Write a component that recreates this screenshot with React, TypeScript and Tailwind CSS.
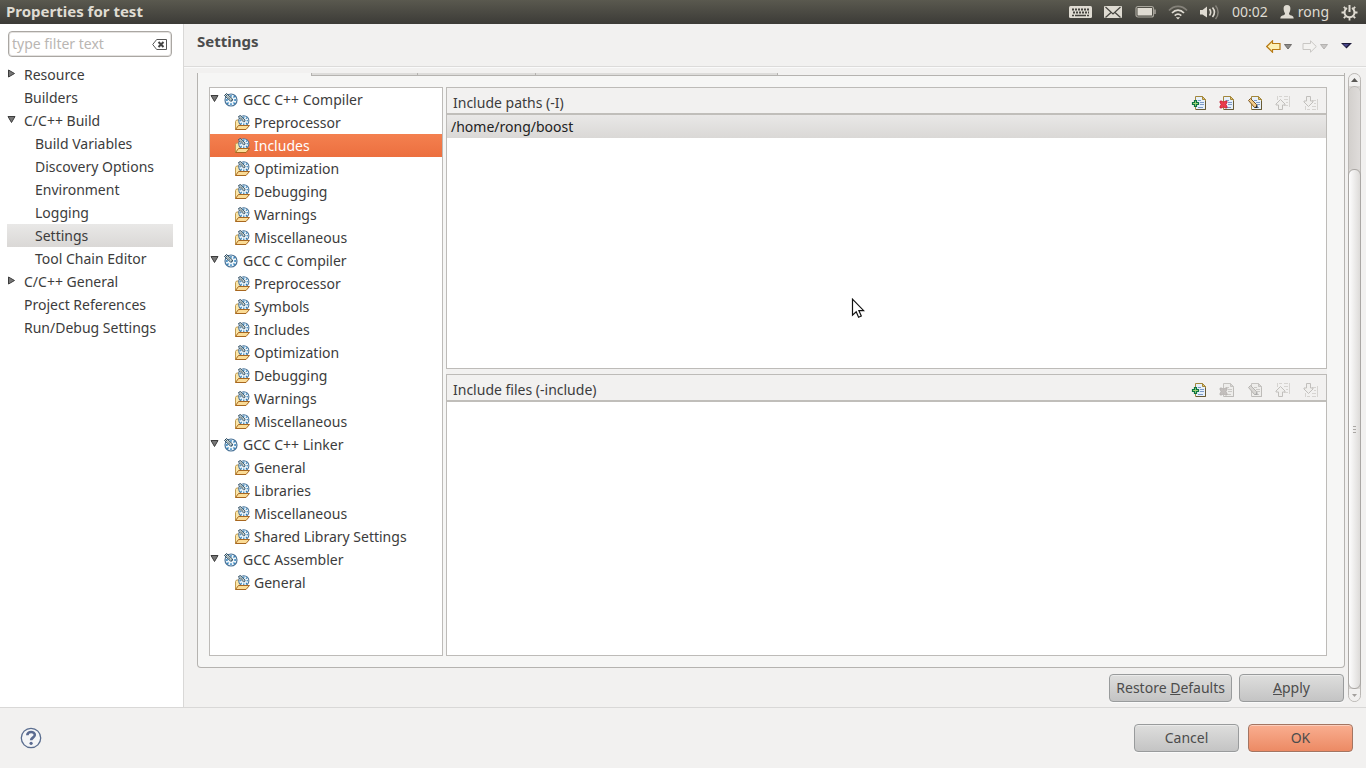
import React, { useState } from "react";
import type { ReactNode } from "react";

type Page = { label: string; level: number; arrow?: "open" | "closed" };

const pages: Page[] = [
  { label: "Resource", level: 0, arrow: "closed" },
  { label: "Builders", level: 0 },
  { label: "C/C++ Build", level: 0, arrow: "open" },
  { label: "Build Variables", level: 1 },
  { label: "Discovery Options", level: 1 },
  { label: "Environment", level: 1 },
  { label: "Logging", level: 1 },
  { label: "Settings", level: 1 },
  { label: "Tool Chain Editor", level: 1 },
  { label: "C/C++ General", level: 0, arrow: "closed" },
  { label: "Project References", level: 0 },
  { label: "Run/Debug Settings", level: 0 },
];

const tools = [
  {
    name: "GCC C++ Compiler",
    options: ["Preprocessor", "Includes", "Optimization", "Debugging", "Warnings", "Miscellaneous"],
  },
  {
    name: "GCC C Compiler",
    options: ["Preprocessor", "Symbols", "Includes", "Optimization", "Debugging", "Warnings", "Miscellaneous"],
  },
  { name: "GCC C++ Linker", options: ["General", "Libraries", "Miscellaneous", "Shared Library Settings"] },
  { name: "GCC Assembler", options: ["General"] },
];

function Arrow({ open }: { open: boolean }) {
  return (
    <svg width="9" height="9" viewBox="0 0 9 9" className="shrink-0" aria-hidden="true">
      {open ? (
        <path d="M1 1.5h7L4.5 7.5z" fill="#777" stroke="#3c3c3c" strokeLinejoin="round" />
      ) : (
        <path d="M1.5 1v7L7.5 4.5z" fill="#777" stroke="#3c3c3c" strokeLinejoin="round" />
      )}
    </svg>
  );
}

function GaugeShape() {
  return (
    <g>
      <circle cx="8" cy="8" r="6" fill="#eef6fb" stroke="#4a7398" strokeWidth="1.2" />
      <path
        d="M8 3v1.8M8 11.2V13M3 8h1.8M11.2 8H13M11.700 4.300l-1.200 1.200M4.300 11.700l1.200-1.200M11.700 11.700l-1.200-1.200"
        stroke="#1f78b8"
        strokeWidth="1.300"
      />
      <path d="M1.500 3.500 3.500 1.500 9.500 7 9 9H7.500z" fill="#dfe6de" stroke="#24445e" strokeWidth="1" />
      <path d="M3 3 8.500 8" stroke="#173954" strokeWidth="1" strokeDasharray="1.200 1" />
    </g>
  );
}

function GaugeIcon() {
  return (
    <svg width="16" height="16" viewBox="0 0 16 16" className="shrink-0" aria-hidden="true">
      <GaugeShape />
    </svg>
  );
}

function FolderIcon() {
  return (
    <svg width="16" height="16" viewBox="0 0 16 16" className="shrink-0" aria-hidden="true">
      <path d="M1.500 14.500v-8l1-1.500h3l1 1.500h6v3" fill="#fbe6a8" stroke="#c09a50" />
      <g transform="translate(3 -1) scale(.85)">
        <GaugeShape />
      </g>
      <path d="M1.500 14.500 4.500 10.500h11l-3.500 4z" fill="#fbdc96" stroke="#a8671f" strokeLinejoin="round" />
    </svg>
  );
}

type ToolKind = "Add" | "Delete" | "Edit" | "Move up" | "Move down";

function ToolIcon({ kind, off }: { kind: ToolKind; off: boolean }) {
  if (kind === "Move up" || kind === "Move down") {
    const up = kind === "Move up";
    return (
      <svg width="16" height="16" viewBox="0 0 16 16" aria-hidden="true">
        <path
          d={
            up
              ? "M2.500 1v4M14.500 1v11M4 1.500h3M9 1.500h4M9 4.500h4M11 7.500h2M9 10.500h4"
              : "M2.500 15v-4M14.500 4v11M9 5.500h4M11 8.500h2M9 11.500h4M4 14.500h3M9 14.500h4"
          }
          fill="none"
          stroke="#d6d4d1"
        />
        <path
          d={up ? "M5.500 4.500 10 9v1H7.500v4.500h-4V10H1V9z" : "M3.500 1.500h4V6H10v1l-4.500 4.500L1 7V6h2.500z"}
          fill="#f0efed"
          stroke="#c1bfbc"
        />
      </svg>
    );
  }
  const edge = off ? "#c5c3c0" : "#a3873c";
  const line = off ? "#cbc9c6" : "#7d9bc8";
  return (
    <svg width="16" height="16" viewBox="0 0 16 16" aria-hidden="true">
      <path d="M4.500 1.500h7l3 3v10h-10z" fill={off ? "#eeedeb" : "#e6f0fb"} stroke={edge} />
      <path d="M5 14.500h9.500V6" fill="none" stroke={off ? "#bdbbb8" : "#675a36"} />
      <path d="M11.500 1.500v3h3z" fill={off ? "#d8d6d3" : "#e8c66a"} stroke={edge} />
      <path d="M7 5.500h3M9 7.500h4M9 9.500h4M7 12.500h5" stroke={line} />
      {kind === "Add" && (
        <path
          d="M3.500 5.500h2v2h2v2h-2v2h-2v-2h-2v-2h2z"
          fill="#a4d878"
          stroke="#0c7440"
          strokeWidth="1.200"
        />
      )}
      {kind === "Delete" && (
        <path
          d="M1 6h2l1 1h1l1-1h2v2L7 9v1l1 1v2H6l-1-1H4l-1 1H1v-2l1-1V9L1 8z"
          fill={off ? "#c3bfbd" : "#ea3c4c"}
          stroke={off ? "#b3afad" : "#c41a31"}
          strokeWidth=".7"
        />
      )}
      {kind === "Edit" && (
        <g>
          <path
            d="M1.500 5.500 3.500 3.500 9.500 9.500v3H7.500z"
            fill={off ? "#d8d6d3" : "#f0c988"}
            stroke={off ? "#b6b4b1" : "#7a5524"}
          />
          <path d="M7.500 13h3V10z" fill={off ? "#aaa" : "#1b2433"} />
        </g>
      )}
    </svg>
  );
}

const toolKinds: ToolKind[] = ["Add", "Delete", "Edit", "Move up", "Move down"];

function ListPane({ title, enabled, children }: { title: string; enabled: ToolKind[]; children?: ReactNode }) {
  return (
    <section className="flex flex-1 flex-col border border-[#bdbbb8] bg-white">
      <div className="flex h-[27px] items-center border-b-2 border-[#c0beba] bg-[#f2f1f0] pr-[7px] pl-1.5">
        <h2 className="flex-1 pt-1">{title}</h2>
        <div className="flex gap-3 pt-1">
          {toolKinds.map((kind) => (
            <button key={kind} type="button" aria-label={kind} disabled={!enabled.includes(kind)}>
              <ToolIcon kind={kind} off={!enabled.includes(kind)} />
            </button>
          ))}
        </div>
      </div>
      {children}
    </section>
  );
}

function StatusArea() {
  const c = "#dfdbd2";
  return (
    <div className="flex items-center gap-3">
      <svg width="23" height="14" viewBox="0 0 23 14" aria-label="Keyboard">
        <rect x="0" y="1" width="23" height="12" rx="1.500" fill={c} />
        <path d="M3 4.500h17M4 7.500h16" stroke="#45443f" strokeWidth="2" strokeDasharray="2 1" />
        <path d="M3 10.500h2M6 10.500h11M18 10.500h2" stroke="#45443f" strokeWidth="1.500" />
      </svg>
      <svg width="19" height="14" viewBox="0 0 19 14" aria-label="Mail">
        <rect x="0" y="1" width="18" height="12" rx="1" fill={c} />
        <path d="M1.500 2 9 9l7.500-7M1.500 12.500 7 7.500M16.500 12.500 11 7.500" fill="none" stroke="#45443f" strokeWidth="1.200" />
      </svg>
      <svg width="21" height="14" viewBox="0 0 21 14" aria-label="Battery">
        <rect x="1" y="1.500" width="17.500" height="10.500" rx="2" fill="none" stroke="#a8a59c" strokeWidth="1.200" />
        <rect x="2.500" y="3" width="14.500" height="7.500" fill={c} />
        <path d="M20 4.500v4.500" stroke="#a8a59c" strokeWidth="1.500" />
      </svg>
      <svg width="20" height="16" viewBox="0 0 20 16" fill="none" aria-label="Network">
        <path d="M1 6.500C6 1 14 1 19 6.500" stroke="#85827a" strokeWidth="1.600" />
        <path d="M4 9c3.500-3.800 8.500-3.800 12 0" stroke={c} strokeWidth="1.700" />
        <path d="M6.700 11.700c2-2 4.600-2 6.600 0" stroke={c} strokeWidth="1.700" />
        <path d="M10 15.500 7.800 13.200h4.400z" fill={c} />
      </svg>
      <svg width="20" height="16" viewBox="0 0 20 16" fill="none" aria-label="Volume">
        <path d="M0 6h2.500L7 2.500v11L2.500 10.500H0z" fill={c} />
        <path d="M9.500 5c1.500 2 1.500 4.500 0 6.500M12.500 3.500c2.500 3 2.500 6.500 0 9.500" stroke={c} strokeWidth="1.600" />
        <path d="M15.500 1.500c3.500 4 3.500 9.500 0 13.500" stroke="#85827a" strokeWidth="1.500" />
      </svg>
      <time className="text-[#dfdbd2]">00:02</time>
      <div className="flex items-center gap-1">
        <svg width="14" height="14" viewBox="0 0 14 14" aria-hidden="true">
          <path
            d="M7 0c2.400 0 3.500 1.600 3.400 3.800C10.300 6 9.600 7.300 9 8.200c0 1.500.8 1.700 2.500 2.300 1.500.5 2 1.200 2.200 3H.3c.2-1.800.7-2.500 2.200-3C4.200 9.900 5 9.700 5 8.200 4.400 7.300 3.700 6 3.600 3.800 3.500 1.600 4.600 0 7 0z"
            fill={c}
          />
        </svg>
        <span className="text-[#dfdbd2]">rong</span>
      </div>
      <svg width="17" height="17" viewBox="0 0 17 17" fill="none" stroke={c} aria-label="Session">
        <path d="M6 4a5 5 0 1 0 5 0" strokeWidth="2" />
        <path d="M8.500 1v7" strokeWidth="2" />
        <path
          d="M8.500 14v2.500M.5 8.500H3M14 8.500h2.500M2.800 2.800l1.800 1.800M14.200 2.800l-1.800 1.800M2.800 14.200l1.800-1.800M14.200 14.200l-1.800-1.800"
          strokeWidth="1.800"
        />
      </svg>
    </div>
  );
}

function HistoryButton({ back }: { back: boolean }) {
  return (
    <button type="button" disabled={!back} aria-label={back ? "Back" : "Forward"} className="flex items-center gap-[3px]">
      <svg width="15" height="13" viewBox="0 0 15 13" aria-hidden="true">
        {back ? (
          <path d="M.7 6.500 6.500.8v2.700h7.500v6H6.500v2.700z" fill="#fdf0b4" stroke="#b87a14" strokeWidth="1.200" />
        ) : (
          <path d="M14.300 6.500 8.500.8v2.700H1v6h7.500v2.700z" fill="#f4f3f1" stroke="#c9c7c4" />
        )}
      </svg>
      <svg width="8" height="6" viewBox="0 0 8 6" className="mt-0.5" aria-hidden="true">
        <path d="M.5.5h7L4 5z" fill={back ? "#8e8c8a" : "#c9c7c5"} stroke={back ? "#716f6d" : "#b4b2b0"} />
      </svg>
    </button>
  );
}

function PushButton({ primary = false, children }: { primary?: boolean; children: ReactNode }) {
  const tone = primary
    ? "border-[#a37562] from-[#f9ae90] to-[#ec8a64]"
    : "border-[#999b9c] from-[#dededd] to-[#c4c4c4]";
  return (
    <button
      type="button"
      className={`h-7 min-w-[105px] rounded border bg-linear-to-b px-1.5 text-[#4c4c4c] shadow-[inset_0_1px_0_rgba(255,255,255,0.4),0_1px_0_#fafafa] ${tone}`}
    >
      {children}
    </button>
  );
}

function ScrollBar() {
  return (
    <div
      role="scrollbar"
      aria-controls="tool-settings"
      aria-orientation="vertical"
      aria-valuenow={100}
      className="flex w-[13px] flex-col rounded-full border border-[#bab7b4] bg-[#d9d6d3]"
    >
      <div className="flex h-3 items-center justify-center rounded-t-full bg-[#f1f0ef]">
        <svg width="7" height="4" viewBox="0 0 7 4" aria-hidden="true">
          <path d="M0 4h7L3.500 0z" fill="#5a5855" />
        </svg>
      </div>
      <div className="h-[83px] rounded-t-md border-t border-[#bab7b4] bg-linear-to-r from-[#d3d0cd] to-[#dfdcda]" />
      <div className="-mx-px flex flex-1 flex-col items-center justify-center gap-0.5 rounded-md border border-[#aaa7a4] bg-linear-to-r from-[#fdfdfd] to-[#dddbd9]">
        <i className="h-px w-[3px] bg-[#aaa7a4]" />
        <i className="h-px w-[3px] bg-[#aaa7a4]" />
        <i className="h-px w-[3px] bg-[#aaa7a4]" />
      </div>
      <div className="flex h-3 items-center justify-center rounded-b-full bg-[#f1f0ef]">
        <svg width="5" height="3" viewBox="0 0 5 3" aria-hidden="true">
          <path d="M0 0h5L2.500 3z" fill="#a3a09d" />
        </svg>
      </div>
    </div>
  );
}

export default function App() {
  const [page, setPage] = useState("Settings");
  const [option, setOption] = useState("GCC C++ Compiler/Includes");

  return (
    <div className="relative flex min-h-screen flex-col bg-[#f2f1f0] font-['Noto_Sans',sans-serif] text-sm text-[#3c3c3c]">
      <header className="flex h-6 items-center justify-between bg-linear-to-b from-[#5a594f] to-[#3c3b37] pr-2 pl-1.5">
        <h1 className="text-[15px] font-bold text-[#dfdbd2]">Properties for test</h1>
        <StatusArea />
      </header>

      <div className="flex flex-1">
        <nav className="w-[184px] shrink-0 border-r border-[#d9d8d7] bg-white pt-[7px] pr-2.5 pl-[7px]" aria-label="Property pages">
          <div className="mx-px flex h-[26px] items-center rounded border border-[#aaa7a3] bg-white pr-1 pl-[3px] shadow-[inset_0_0_0_1px_#e4e2e0]">
            <input
              aria-label="Filter pages"
              placeholder="type filter text"
              className="min-w-0 flex-1 bg-transparent outline-none placeholder:text-[#b9b6b3]"
            />
            <button type="button" aria-label="Clear filter">
              <svg width="15" height="11" viewBox="0 0 15 11" aria-hidden="true">
                <path d="M.7 5.500 4.700.5h9.800v10H4.700z" fill="#fff" stroke="#555" />
                <path d="m6.500 3 5 5M11.500 3l-5 5" stroke="#444" strokeWidth="2" />
              </svg>
            </button>
          </div>
          <ul className="pt-1.5">
            {pages.map((p) => (
              <li key={p.label}>
                <button
                  type="button"
                  onClick={() => setPage(p.label)}
                  className={`flex h-[23px] w-full items-center text-left whitespace-nowrap ${
                    page === p.label ? "bg-linear-to-b from-[#e9e8e7] to-[#dad8d6]" : ""
                  }`}
                >
                  <span className={`shrink-0 pb-0.5 ${p.level === 0 ? "w-[17px]" : "w-7"}`}>
                    {p.arrow && <Arrow open={p.arrow === "open"} />}
                  </span>
                  {p.label}
                </button>
              </li>
            ))}
          </ul>
        </nav>

        <main className="flex min-w-0 flex-1 flex-col">
          <div className="flex h-[43px] items-center justify-between border-b border-[#dcdbda] pr-3.5 pb-1.5 pl-[13px]">
            <h2 className="text-[15px] font-bold text-[#4c4c4c]">Settings</h2>
            <div className="flex items-center gap-2.5 pt-2">
              <HistoryButton back />
              <HistoryButton back={false} />
              <button type="button" aria-label="Menu" className="pl-[3px]">
                <svg width="11" height="6" viewBox="0 0 11 6" aria-hidden="true">
                  <path d="M0 0h11L5.500 5.500z" fill="#1c1a3a" />
                  <path d="M2 1h6L5 4z" fill="#4a478c" />
                </svg>
              </button>
            </div>
          </div>

          <div className="flex flex-1 gap-[3px] border-t border-[#fafafa] pt-[5px] pr-[5px] pb-[5px] pl-[13px]">
            <div className="flex min-w-0 flex-1 flex-col">
              <div id="tool-settings" className="flex flex-1 flex-col rounded-b border-x border-b border-[#b5b3b0] bg-[#f6f6f5]">
                <div className="flex h-[3px]">
                  <div className="w-[113px]" />
                  <div className="w-[106px] border-b border-l border-[#b5b3b0] bg-[#dddcda]" />
                  <div className="w-[118px] border-b border-l border-[#b5b3b0] bg-[#dddcda]" />
                  <div className="w-[243px] border-r border-b border-l border-[#b5b3b0] bg-[#dddcda]" />
                  <div className="flex-1 border-b border-[#b5b3b0] bg-[#f2f1f0]" />
                </div>
                <div className="flex flex-1 gap-[3px] pt-[11px] pr-[17px] pb-[11px] pl-[11px]">
                  <ul className="w-[234px] shrink-0 border border-[#bdbbb8] bg-white">
                    {tools.map((tool) => (
                      <li key={tool.name}>
                        <button type="button" className="flex h-[23px] w-full items-center text-left whitespace-nowrap">
                          <span className="w-[13px] shrink-0 pb-0.5">
                            <Arrow open />
                          </span>
                          <GaugeIcon />
                          <span className="pl-1">{tool.name}</span>
                        </button>
                        <ul>
                          {tool.options.map((name) => {
                            const id = `${tool.name}/${name}`;
                            return (
                              <li key={id}>
                                <button
                                  type="button"
                                  onClick={() => setOption(id)}
                                  className={`flex h-[23px] w-full items-center gap-1 pl-6 text-left whitespace-nowrap ${
                                    option === id ? "bg-linear-to-b from-[#f4804f] to-[#ec6f3f] text-white" : ""
                                  }`}
                                >
                                  <FolderIcon />
                                  {name}
                                </button>
                              </li>
                            );
                          })}
                        </ul>
                      </li>
                    ))}
                  </ul>
                  <div className="flex min-w-0 flex-1 flex-col gap-[5px] bg-[#f2f1f0]">
                    <ListPane title="Include paths (-I)" enabled={["Add", "Delete", "Edit"]}>
                      <ul>
                        <li className="flex h-[23px] items-center bg-linear-to-b from-[#e9e8e7] to-[#dad8d6] pl-1 text-[#222]">
                          /home/rong/boost
                        </li>
                      </ul>
                    </ListPane>
                    <ListPane title="Include files (-include)" enabled={["Add"]} />
                  </div>
                </div>
              </div>
              <div className="flex justify-end gap-[7px] pt-1.5 pr-px">
                <PushButton>
                  Restore <u>D</u>efaults
                </PushButton>
                <PushButton>
                  <u>A</u>pply
                </PushButton>
              </div>
            </div>
            <ScrollBar />
          </div>
        </main>
      </div>

      <footer className="flex h-[61px] items-center justify-between border-t border-[#d9d8d7] pr-[13px] pl-5">
        <button type="button" aria-label="Help">
          <svg width="22" height="22" viewBox="0 0 22 22" aria-hidden="true">
            <circle cx="11" cy="11" r="9.700" fill="#f4f5f7" stroke="#5a6d8f" strokeWidth="1.300" />
            <path d="M7.300 8.200C7.300 3.800 15 4 14.800 8c-.1 2.600-3.700 2.700-3.700 5.300" fill="none" stroke="#5a6a90" strokeWidth="2.600" />
            <circle cx="11.100" cy="16.300" r="1.600" fill="#5a6a90" />
          </svg>
        </button>
        <div className="flex gap-[9px]">
          <PushButton>Cancel</PushButton>
          <PushButton primary>OK</PushButton>
        </div>
      </footer>

      <svg
        width="14"
        height="21"
        viewBox="0 0 14 21"
        className="pointer-events-none absolute top-[298px] left-[851px]"
        aria-hidden="true"
      >
        <path
          d="M1.500 1.200v16l3.700-3.500 2.400 5.500 2.700-1.200-2.400-5.300h4.800z"
          fill="#fff"
          stroke="#111"
          strokeWidth="1.200"
        />
      </svg>
    </div>
  );
}
